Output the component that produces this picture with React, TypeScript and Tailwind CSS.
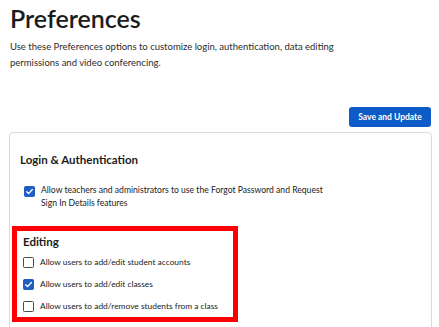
import { useState } from 'react'

interface CheckRowProps {
  label: React.ReactNode
  checked: boolean
  onToggle: () => void
}

function CheckBox({ checked, onToggle }: { checked: boolean; onToggle: () => void }) {
  return (
    <button
      type="button"
      onClick={onToggle}
      className={`flex items-center justify-center w-[11px] h-[11px] shrink-0 rounded-[1.5px] border ${
        checked ? 'bg-[#1f5fc4] border-[#1f5fc4]' : 'bg-white border-[#4a4a4a]'
      }`}
    >
      {checked && (
        <svg viewBox="0 0 12 12" className="w-[9px] h-[9px]">
          <path d="M2.2 6.3 L4.8 8.8 L9.8 3.4" fill="none" stroke="white" strokeWidth="1.8" strokeLinecap="round" strokeLinejoin="round" />
        </svg>
      )}
    </button>
  )
}

function CheckRow({ label, checked, onToggle }: CheckRowProps) {
  return (
    <div className="flex items-center gap-[6px] h-[22px]">
      <CheckBox checked={checked} onToggle={onToggle} />
      <span className="text-[8.4px] text-[#222]">{label}</span>
    </div>
  )
}

const EDITING_ITEMS = [
  'Allow users to add/edit student accounts',
  'Allow users to add/edit classes',
  'Allow users to add/remove students from a class'
]

function App(): React.ReactElement {
  const [forgot, setForgot] = useState(true)
  const [editing, setEditing] = useState<boolean[]>([false, true, false])

  function toggleEditing(index: number) {
    setEditing((prev) => {
      const next = [...prev]
      next[index] = !next[index]
      return next
    })
  }

  return (
    <div className="w-[439px] h-[327px] overflow-hidden bg-white font-['Lato',sans-serif] text-[#1c1c1c]">
      <div className="px-[10px] pt-[3px]">
        <h1 className="text-[25px] leading-[30px] font-semibold">Preferences</h1>
        <p className="mt-[6px] text-[9.5px] leading-[16px] text-[#2b2b2b]">
          Use these Preferences options to customize login, authentication, data editing
          <br />
          permissions and video conferencing.
        </p>
      </div>

      <div className="flex justify-end pr-[8px] mt-[36px]">
        <button
          type="button"
          className="h-[20px] w-[82px] rounded-[3px] bg-[#0d5bc6] text-white text-[8.5px] font-bold"
        >
          Save and Update
        </button>
      </div>

      <div className="ml-[9px] mr-[7px] mt-[5px] h-[220px] border border-[#d9dcdf] rounded-[4px]">
        <div className="px-[10px] pt-[19px]">
          <h2 className="text-[11.5px] leading-[16px] font-bold">Login &amp; Authentication</h2>
          <div className="flex items-start gap-[6px] mt-[16px] pl-[4px]">
            <div className="pt-[1.5px]">
              <CheckBox checked={forgot} onToggle={() => setForgot(!forgot)} />
            </div>
            <p className="text-[8.6px] leading-[13px] text-[#222]">
              Allow teachers and administrators to use the Forgot Password and Request
              <br />
              Sign In Details features
            </p>
          </div>
        </div>

        <div className="ml-[2px] mt-[16px] w-[226px] border-[5px] border-[#ff0000] pl-[6px] pt-[3px]">
          <h2 className="text-[11.5px] leading-[16px] font-bold">Editing</h2>
          <div className="mt-[1px]">
            {EDITING_ITEMS.map((item, i) => (
              <CheckRow key={item} label={item} checked={editing[i]} onToggle={() => toggleEditing(i)} />
            ))}
          </div>
        </div>
      </div>
    </div>
  )
}

export default App
